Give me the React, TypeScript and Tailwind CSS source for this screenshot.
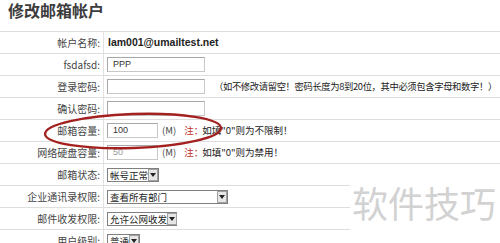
import React from "react";

const CJK = "font-['SimSun','Noto_Sans_CJK_SC',sans-serif]";

function Row({ label, children }: { label: string; children?: React.ReactNode }) {
  return (
    <div className="flex h-[22px] border-b border-[#dedede]">
      <div className="flex w-[103px] shrink-0 items-center justify-end whitespace-nowrap pr-[3px] text-[10px] text-[#444]">
        {label}
      </div>
      <div className="flex flex-1 items-center whitespace-nowrap border-l border-[#e2e2e2] pl-[3px]">{children}</div>
    </div>
  );
}

function TextBox({ value, width, gray }: { value?: string; width: string; gray?: boolean }) {
  return (
    <div
      className={`flex h-[15px] shrink-0 items-center border border-[#c8c8c8] border-t-[#a8a8a8] border-l-[#a8a8a8] bg-white pl-[5px] font-['Liberation_Sans',sans-serif] text-[9px] ${width} ${
        gray ? "text-[#999]" : "text-[#333]"
      }`}
    >
      {value}
    </div>
  );
}

function Select({ value, width }: { value: string; width: string }) {
  return (
    <div className={`flex h-[14px] shrink-0 items-center border border-[#7f7f7f] bg-white ${width}`}>
      <span className="flex-1 whitespace-nowrap pl-[2px] text-[9.5px] leading-[12px] text-[#222]">{value}</span>
      <span className="flex h-[12px] w-[10px] shrink-0 items-center justify-center border border-[#a0a0a0] bg-[#e6e6e6]">
        <svg width="6" height="4" viewBox="0 0 6 4">
          <path d="M0 0 L6 0 L3 4 Z" fill="#222" />
        </svg>
      </span>
    </div>
  );
}

function Note({ text }: { text: string }) {
  return (
    <div className="ml-[4px] flex items-center text-[9.5px]">
      <span className="text-[#444]">(M)</span>
      <span className="ml-[8px] text-[#c0302a]">注：</span>
      <span className="-ml-[1px] text-[#222]">{text}</span>
    </div>
  );
}

export default function App() {
  return (
    <div className={`relative h-[243px] w-[500px] overflow-hidden bg-white ${CJK}`}>
      <div className="h-[31px] whitespace-nowrap pl-[8px] pt-[1px] text-[16px] font-bold leading-[19px] text-[#3c3c3c]">
        修改邮箱帐户
      </div>
      <div className="border-t border-[#dedede]">
        <Row label="帐户名称:">
          <span className="pl-[1px] font-['Liberation_Sans',sans-serif] text-[10.5px] font-bold text-[#222]">
            lam001@umailtest.net
          </span>
        </Row>
        <Row label="fsdafsd:">
          <TextBox value="PPP" width="w-[98px]" />
        </Row>
        <Row label="登录密码:">
          <TextBox width="w-[98px]" />
          <span className="ml-[9px] text-[9.3px] tracking-[-0.35px] text-[#222]">
            （如不修改请留空！密码长度为8到20位，其中必须包含字母和数字！）
          </span>
        </Row>
        <Row label="确认密码:">
          <TextBox width="w-[98px]" />
        </Row>
        <Row label="邮箱容量:">
          <TextBox value="100" width="w-[51px]" />
          <Note text={'如填"0"则为不限制！'} />
        </Row>
        <Row label="网络硬盘容量:">
          <TextBox value="50" width="w-[51px]" gray />
          <Note text={'如填"0"则为禁用！'} />
        </Row>
        <Row label="邮箱状态:">
          <Select value="帐号正常" width="w-[52px]" />
        </Row>
        <Row label="企业通讯录权限:">
          <Select value="查看所有部门" width="w-[121px]" />
        </Row>
        <Row label="邮件收发权限:">
          <Select value="允许公网收发" width="w-[70px]" />
        </Row>
        <Row label="用户级别:">
          <Select value="普通" width="w-[33px]" />
        </Row>
      </div>

      {/* watermark */}
      <div className="absolute left-[350px] top-[166px] flex h-[77px] w-[150px] items-start justify-end whitespace-nowrap bg-white pr-[4px] pt-[18px]">
        <span className="text-[36px] leading-none text-[#d2d2d2]">软件技巧</span>
      </div>

      {/* red annotation ring */}
      <svg className="pointer-events-none absolute left-0 top-0" width="500" height="243">
        <ellipse
          cx="133"
          cy="131"
          rx="88"
          ry="17"
          fill="none"
          stroke="#a3211f"
          strokeWidth="2.4"
          transform="rotate(-2 133 131)"
        />
      </svg>
    </div>
  );
}
